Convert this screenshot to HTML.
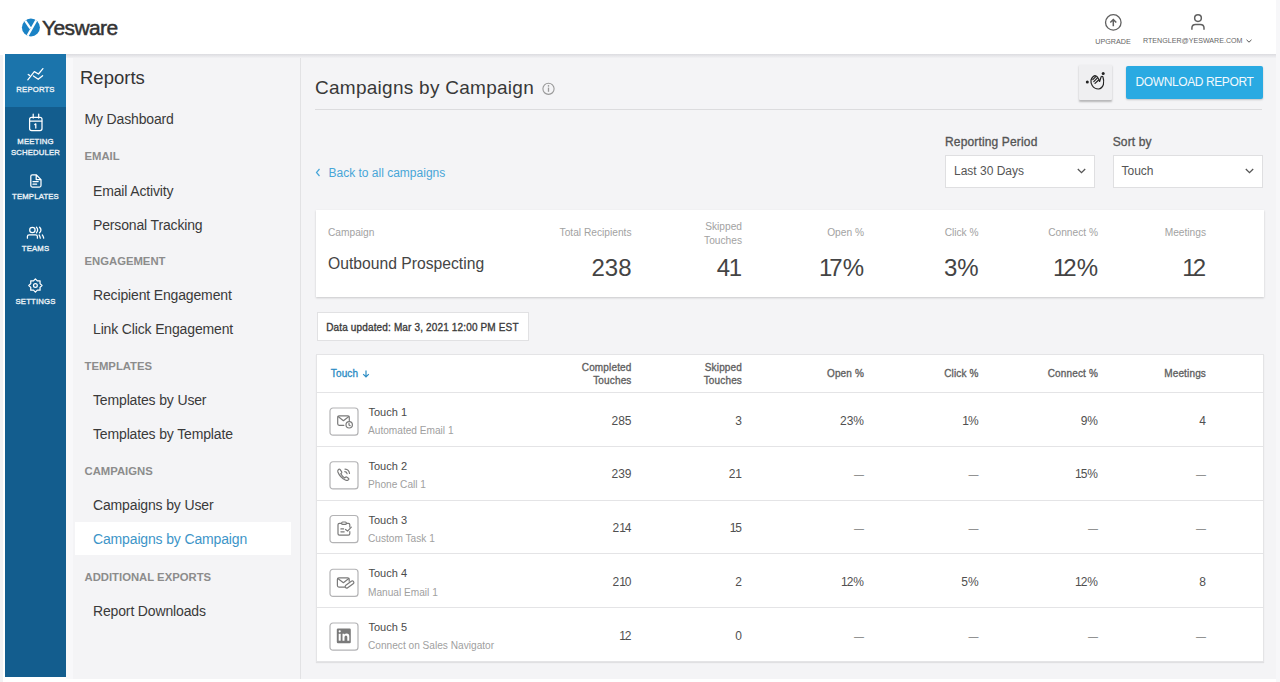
<!DOCTYPE html>
<html><head><meta charset="utf-8">
<style>
*{margin:0;padding:0;box-sizing:border-box}
html,body{width:1280px;height:682px;overflow:hidden;background:#fff;font-family:"Liberation Sans",sans-serif;color:#333}
.abs{position:absolute}
.t{position:absolute;white-space:nowrap;line-height:1}
svg{position:absolute;overflow:visible}
</style></head><body>
<div class="abs" style="left:0px;top:0px;width:3px;height:682px;background:#f1f1f3"></div>
<div class="abs" style="left:1276px;top:0px;width:4px;height:682px;background:#f7f7f9"></div>
<div class="abs" style="left:0px;top:0px;width:1276px;height:55px;background:#fff"></div>
<div class="abs" style="left:5px;top:54px;width:61px;height:623px;background:#135d8e"></div>
<div class="abs" style="left:5px;top:54px;width:61px;height:53px;background:#1b74ab"></div>
<div class="abs" style="left:66px;top:54px;width:234px;height:625px;background:#f4f4f6"></div>
<div class="abs" style="left:66px;top:54px;width:7px;height:625px;background:#f8f8fa"></div>
<div class="abs" style="left:300px;top:54px;width:1px;height:625px;background:#e2e2e4"></div>
<div class="abs" style="left:301px;top:54px;width:975px;height:625px;background:#f4f4f6"></div>
<div class="abs" style="left:66px;top:54px;width:1210px;height:3.5px;background:linear-gradient(#dcdce0,#f2f2f4)"></div>
<div class="t" style="left:42px;top:17.0px;font-size:21px;color:#333;font-weight:normal;letter-spacing:-0.6px;-webkit-text-stroke:0.5px #333">Yesware</div>
<div class="t" style="left:913px;width:400px;text-align:center;top:37.9px;font-size:7.2px;color:#666;font-weight:normal;">UPGRADE</div>
<div class="t" style="left:1143px;top:38.0px;font-size:7.1px;color:#666;font-weight:normal;">RTENGLER@YESWARE.COM</div>
<svg style="left:1246px;top:39px" width="6" height="4" viewBox="0 0 6 4"><path d="M0.5 0.8 L3 3.2 L5.5 0.8" stroke="#555" stroke-width="1" fill="none"/></svg>
<div class="t" style="left:-164.5px;width:400px;text-align:center;top:85.6px;font-size:7.75px;color:#edf3f8;font-weight:normal;-webkit-text-stroke:0.32px #edf3f8;letter-spacing:0.15px;">REPORTS</div>
<div class="t" style="left:-164.5px;width:400px;text-align:center;top:137.7px;font-size:7.75px;color:#edf3f8;font-weight:normal;-webkit-text-stroke:0.32px #edf3f8;letter-spacing:0.15px;">MEETING</div>
<div class="t" style="left:-164.5px;width:400px;text-align:center;top:148.5px;font-size:7.75px;color:#edf3f8;font-weight:normal;-webkit-text-stroke:0.32px #edf3f8;letter-spacing:0.15px;">SCHEDULER</div>
<div class="t" style="left:-164.5px;width:400px;text-align:center;top:192.5px;font-size:7.75px;color:#edf3f8;font-weight:normal;-webkit-text-stroke:0.32px #edf3f8;letter-spacing:0.15px;">TEMPLATES</div>
<div class="t" style="left:-164.5px;width:400px;text-align:center;top:244.9px;font-size:7.75px;color:#edf3f8;font-weight:normal;-webkit-text-stroke:0.32px #edf3f8;letter-spacing:0.15px;">TEAMS</div>
<div class="t" style="left:-164.5px;width:400px;text-align:center;top:297.5px;font-size:7.75px;color:#edf3f8;font-weight:normal;-webkit-text-stroke:0.32px #edf3f8;letter-spacing:0.15px;">SETTINGS</div>
<div class="t" style="left:80px;top:68.8px;font-size:18.5px;color:#333;font-weight:normal;">Reports</div>
<div class="t" style="left:84.5px;top:111.8px;font-size:14px;color:#3a3a3a;font-weight:normal;letter-spacing:-0.15px">My Dashboard</div>
<div class="t" style="left:84.5px;top:151.3px;font-size:11.3px;color:#8c8c8c;font-weight:bold;">EMAIL</div>
<div class="t" style="left:93px;top:183.5px;font-size:14px;color:#3a3a3a;font-weight:normal;letter-spacing:-0.15px">Email Activity</div>
<div class="t" style="left:93px;top:217.5px;font-size:14px;color:#3a3a3a;font-weight:normal;letter-spacing:-0.15px">Personal Tracking</div>
<div class="t" style="left:84.5px;top:256.2px;font-size:11.3px;color:#8c8c8c;font-weight:bold;">ENGAGEMENT</div>
<div class="t" style="left:93px;top:288.3px;font-size:14px;color:#3a3a3a;font-weight:normal;letter-spacing:-0.15px">Recipient Engagement</div>
<div class="t" style="left:93px;top:322.2px;font-size:14px;color:#3a3a3a;font-weight:normal;letter-spacing:-0.15px">Link Click Engagement</div>
<div class="t" style="left:84.5px;top:361.0px;font-size:11.3px;color:#8c8c8c;font-weight:bold;">TEMPLATES</div>
<div class="t" style="left:93px;top:393.2px;font-size:14px;color:#3a3a3a;font-weight:normal;letter-spacing:-0.15px">Templates by User</div>
<div class="t" style="left:93px;top:427.0px;font-size:14px;color:#3a3a3a;font-weight:normal;letter-spacing:-0.15px">Templates by Template</div>
<div class="t" style="left:84.5px;top:466.4px;font-size:11.3px;color:#8c8c8c;font-weight:bold;">CAMPAIGNS</div>
<div class="t" style="left:93px;top:498.0px;font-size:14px;color:#3a3a3a;font-weight:normal;letter-spacing:-0.15px">Campaigns by User</div>
<div class="abs" style="left:75px;top:522px;width:216px;height:33px;background:#fff"></div>
<div class="t" style="left:93px;top:532.0px;font-size:14px;color:#3d95c8;font-weight:normal;letter-spacing:-0.15px">Campaigns by Campaign</div>
<div class="t" style="left:84.5px;top:572.0px;font-size:11.3px;color:#8c8c8c;font-weight:bold;">ADDITIONAL EXPORTS</div>
<div class="t" style="left:93px;top:603.5px;font-size:14px;color:#3a3a3a;font-weight:normal;letter-spacing:-0.15px">Report Downloads</div>
<div class="t" style="left:315px;top:77.9px;font-size:19px;color:#383838;font-weight:normal;letter-spacing:0.27px">Campaigns by Campaign</div>
<div class="abs" style="left:315px;top:109px;width:947px;height:1px;background:#dcdcde"></div>
<div class="abs" style="left:1079px;top:65px;width:33px;height:35px;background:#efeff1;box-shadow:0 1.5px 2px rgba(0,0,0,0.25);border-radius:1px"></div>
<div class="abs" style="left:1126px;top:66px;width:137px;height:33px;background:#2aaae2;border-radius:2px;box-shadow:0 1px 2px rgba(0,0,0,0.2)"></div>
<div class="t" style="left:994.5px;width:400px;text-align:center;top:76.0px;font-size:12px;color:#f2f9fd;font-weight:normal;letter-spacing:-0.4px">DOWNLOAD REPORT</div>
<div class="t" style="left:328.5px;top:166.5px;font-size:12px;color:#48a6d8;font-weight:normal;">Back to all campaigns</div>
<svg style="left:315px;top:168px" width="6" height="9" viewBox="0 0 6 9"><path d="M4.5 1 L1.5 4.5 L4.5 8" stroke="#48a6d8" stroke-width="1.2" fill="none"/></svg>
<div class="t" style="left:945px;top:136.0px;font-size:12px;color:#555;font-weight:normal;-webkit-text-stroke:0.32px #555;letter-spacing:0.15px;">Reporting Period</div>
<div class="t" style="left:1112.7px;top:136.0px;font-size:12px;color:#555;font-weight:normal;-webkit-text-stroke:0.32px #555;letter-spacing:0.15px;">Sort by</div>
<div class="abs" style="left:945px;top:155px;width:150px;height:33px;background:#fff;border:1px solid #dfdfe1"></div>
<div class="abs" style="left:1112.5px;top:155px;width:150px;height:33px;background:#fff;border:1px solid #dfdfe1"></div>
<div class="t" style="left:954px;top:164.6px;font-size:12px;color:#555;font-weight:normal;">Last 30 Days</div>
<div class="t" style="left:1121.5px;top:164.6px;font-size:12px;color:#555;font-weight:normal;">Touch</div>
<svg style="left:1077.0px;top:168px" width="9" height="6" viewBox="0 0 9 6"><path d="M0.8 1 L4.5 4.6 L8.2 1" stroke="#555" stroke-width="1.3" fill="none"/></svg>
<svg style="left:1244.5px;top:168px" width="9" height="6" viewBox="0 0 9 6"><path d="M0.8 1 L4.5 4.6 L8.2 1" stroke="#555" stroke-width="1.3" fill="none"/></svg>
<div class="abs" style="left:316px;top:210px;width:948px;height:87px;background:#fff;box-shadow:0 1px 2px rgba(0,0,0,0.18)"></div>
<div class="t" style="left:328px;top:228.1px;font-size:10.2px;color:#a2a2a2;font-weight:normal;">Campaign</div>
<div class="t" style="left:231.5px;width:400px;text-align:right;top:228.1px;font-size:10.2px;color:#a2a2a2;font-weight:normal;">Total Recipients</div>
<div class="t" style="left:342px;width:400px;text-align:right;top:222.2px;font-size:10.2px;color:#a2a2a2;font-weight:normal;">Skipped</div>
<div class="t" style="left:342px;width:400px;text-align:right;top:235.6px;font-size:10.2px;color:#a2a2a2;font-weight:normal;">Touches</div>
<div class="t" style="left:464px;width:400px;text-align:right;top:228.1px;font-size:10.2px;color:#a2a2a2;font-weight:normal;">Open %</div>
<div class="t" style="left:578.6px;width:400px;text-align:right;top:228.1px;font-size:10.2px;color:#a2a2a2;font-weight:normal;">Click %</div>
<div class="t" style="left:698px;width:400px;text-align:right;top:228.1px;font-size:10.2px;color:#a2a2a2;font-weight:normal;">Connect %</div>
<div class="t" style="left:806px;width:400px;text-align:right;top:228.1px;font-size:10.2px;color:#a2a2a2;font-weight:normal;">Meetings</div>
<div class="t" style="left:328px;top:256.1px;font-size:15.7px;color:#454545;font-weight:normal;">Outbound Prospecting</div>
<div class="t" style="left:231.5px;width:400px;text-align:right;top:255.5px;font-size:24px;color:#444;font-weight:normal;">238</div>
<div class="t" style="left:339px;width:400px;text-align:right;top:255.5px;font-size:24px;color:#444;font-weight:normal;"><span style="letter-spacing:-1.5px">4</span><span style="letter-spacing:-3px">1</span></div>
<div class="t" style="left:461.5px;width:400px;text-align:right;top:255.5px;font-size:24px;color:#444;font-weight:normal;"><span style="letter-spacing:-3px">1</span>7<span style="letter-spacing:-2.5px">%</span></div>
<div class="t" style="left:576.1px;width:400px;text-align:right;top:255.5px;font-size:24px;color:#444;font-weight:normal;">3<span style="letter-spacing:-2.5px">%</span></div>
<div class="t" style="left:695.5px;width:400px;text-align:right;top:255.5px;font-size:24px;color:#444;font-weight:normal;"><span style="letter-spacing:-3px">1</span>2<span style="letter-spacing:-2.5px">%</span></div>
<div class="t" style="left:806px;width:400px;text-align:right;top:255.5px;font-size:24px;color:#444;font-weight:normal;"><span style="letter-spacing:-3px">1</span>2</div>
<div class="abs" style="left:317px;top:311.5px;width:212px;height:29px;background:#fff;border:1px solid #e1e1e3"></div>
<div class="t" style="left:326.2px;top:323.0px;font-size:10px;color:#3a3a3a;font-weight:normal;-webkit-text-stroke:0.32px #3a3a3a;letter-spacing:0.15px;">Data updated: Mar 3, 2021 12:00 PM EST</div>
<div class="abs" style="left:316px;top:354px;width:948px;height:307.5px;background:#fff;border:1px solid #e4e4e6;box-shadow:0 1px 1px rgba(0,0,0,0.08)"></div>
<div class="t" style="left:330.8px;top:369.0px;font-size:10px;color:#2b8cc4;font-weight:normal;-webkit-text-stroke:0.32px #2b8cc4;letter-spacing:0.15px;">Touch</div>
<svg style="left:362px;top:370px" width="8" height="8" viewBox="0 0 8 8"><path d="M4 0.5 V7 M1.2 4.2 L4 7 L6.8 4.2" stroke="#2b8cc4" stroke-width="1.2" fill="none"/></svg>
<div class="t" style="left:231.5px;width:400px;text-align:right;top:362.5px;font-size:10px;color:#606060;font-weight:normal;-webkit-text-stroke:0.32px #606060;letter-spacing:0.15px;">Completed</div>
<div class="t" style="left:231.5px;width:400px;text-align:right;top:375.5px;font-size:10px;color:#606060;font-weight:normal;-webkit-text-stroke:0.32px #606060;letter-spacing:0.15px;">Touches</div>
<div class="t" style="left:342px;width:400px;text-align:right;top:362.5px;font-size:10px;color:#606060;font-weight:normal;-webkit-text-stroke:0.32px #606060;letter-spacing:0.15px;">Skipped</div>
<div class="t" style="left:342px;width:400px;text-align:right;top:375.5px;font-size:10px;color:#606060;font-weight:normal;-webkit-text-stroke:0.32px #606060;letter-spacing:0.15px;">Touches</div>
<div class="t" style="left:464px;width:400px;text-align:right;top:369.0px;font-size:10px;color:#606060;font-weight:normal;-webkit-text-stroke:0.32px #606060;letter-spacing:0.15px;">Open %</div>
<div class="t" style="left:578.6px;width:400px;text-align:right;top:369.0px;font-size:10px;color:#606060;font-weight:normal;-webkit-text-stroke:0.32px #606060;letter-spacing:0.15px;">Click %</div>
<div class="t" style="left:698px;width:400px;text-align:right;top:369.0px;font-size:10px;color:#606060;font-weight:normal;-webkit-text-stroke:0.32px #606060;letter-spacing:0.15px;">Connect %</div>
<div class="t" style="left:806px;width:400px;text-align:right;top:369.0px;font-size:10px;color:#606060;font-weight:normal;-webkit-text-stroke:0.32px #606060;letter-spacing:0.15px;">Meetings</div>
<div class="abs" style="left:316px;top:392.1px;width:948px;height:1px;background:#e4e4e6"></div>
<div class="t" style="left:368.5px;top:407.2px;font-size:11px;color:#4a4a4a;font-weight:normal;">Touch 1</div>
<div class="t" style="left:368px;top:426.3px;font-size:10.15px;color:#a0a0a0;font-weight:normal;">Automated Email 1</div>
<div class="t" style="left:231.5px;width:400px;text-align:right;top:414.6px;font-size:12px;color:#505050;font-weight:normal;">285</div>
<div class="t" style="left:342px;width:400px;text-align:right;top:414.6px;font-size:12px;color:#505050;font-weight:normal;">3</div>
<div class="t" style="left:463px;width:400px;text-align:right;top:414.6px;font-size:12px;color:#505050;font-weight:normal;">23<span style="letter-spacing:-1px">%</span></div>
<div class="t" style="left:577.6px;width:400px;text-align:right;top:414.6px;font-size:12px;color:#505050;font-weight:normal;"><span style="letter-spacing:-1px">1</span><span style="letter-spacing:-1px">%</span></div>
<div class="t" style="left:697px;width:400px;text-align:right;top:414.6px;font-size:12px;color:#505050;font-weight:normal;">9<span style="letter-spacing:-1px">%</span></div>
<div class="t" style="left:806px;width:400px;text-align:right;top:414.6px;font-size:12px;color:#505050;font-weight:normal;">4</div>
<div class="abs" style="left:316px;top:445.83000000000004px;width:948px;height:1px;background:#e4e4e6"></div>
<div class="t" style="left:368.5px;top:460.9px;font-size:11px;color:#4a4a4a;font-weight:normal;">Touch 2</div>
<div class="t" style="left:368px;top:480.1px;font-size:10.15px;color:#a0a0a0;font-weight:normal;">Phone Call 1</div>
<div class="t" style="left:231.5px;width:400px;text-align:right;top:468.3px;font-size:12px;color:#505050;font-weight:normal;">239</div>
<div class="t" style="left:341px;width:400px;text-align:right;top:468.3px;font-size:12px;color:#505050;font-weight:normal;">2<span style="letter-spacing:-1px">1</span></div>
<div class="t" style="left:464px;width:400px;text-align:right;top:470.3px;font-size:10px;color:#7a7a7a;font-weight:normal;">—</div>
<div class="t" style="left:578.6px;width:400px;text-align:right;top:470.3px;font-size:10px;color:#7a7a7a;font-weight:normal;">—</div>
<div class="t" style="left:697px;width:400px;text-align:right;top:468.3px;font-size:12px;color:#505050;font-weight:normal;"><span style="letter-spacing:-1px">1</span>5<span style="letter-spacing:-1px">%</span></div>
<div class="t" style="left:806px;width:400px;text-align:right;top:470.3px;font-size:10px;color:#7a7a7a;font-weight:normal;">—</div>
<div class="abs" style="left:316px;top:499.56px;width:948px;height:1px;background:#e4e4e6"></div>
<div class="t" style="left:368.5px;top:514.7px;font-size:11px;color:#4a4a4a;font-weight:normal;">Touch 3</div>
<div class="t" style="left:368px;top:533.8px;font-size:10.15px;color:#a0a0a0;font-weight:normal;">Custom Task 1</div>
<div class="t" style="left:231.5px;width:400px;text-align:right;top:522.1px;font-size:12px;color:#505050;font-weight:normal;">2<span style="letter-spacing:-1px">1</span>4</div>
<div class="t" style="left:342px;width:400px;text-align:right;top:522.1px;font-size:12px;color:#505050;font-weight:normal;"><span style="letter-spacing:-1px">1</span>5</div>
<div class="t" style="left:464px;width:400px;text-align:right;top:524.1px;font-size:10px;color:#7a7a7a;font-weight:normal;">—</div>
<div class="t" style="left:578.6px;width:400px;text-align:right;top:524.1px;font-size:10px;color:#7a7a7a;font-weight:normal;">—</div>
<div class="t" style="left:698px;width:400px;text-align:right;top:524.1px;font-size:10px;color:#7a7a7a;font-weight:normal;">—</div>
<div class="t" style="left:806px;width:400px;text-align:right;top:524.1px;font-size:10px;color:#7a7a7a;font-weight:normal;">—</div>
<div class="abs" style="left:316px;top:553.29px;width:948px;height:1px;background:#e4e4e6"></div>
<div class="t" style="left:368.5px;top:568.4px;font-size:11px;color:#4a4a4a;font-weight:normal;">Touch 4</div>
<div class="t" style="left:368px;top:587.5px;font-size:10.15px;color:#a0a0a0;font-weight:normal;">Manual Email 1</div>
<div class="t" style="left:231.5px;width:400px;text-align:right;top:575.8px;font-size:12px;color:#505050;font-weight:normal;">2<span style="letter-spacing:-1px">1</span>0</div>
<div class="t" style="left:342px;width:400px;text-align:right;top:575.8px;font-size:12px;color:#505050;font-weight:normal;">2</div>
<div class="t" style="left:463px;width:400px;text-align:right;top:575.8px;font-size:12px;color:#505050;font-weight:normal;"><span style="letter-spacing:-1px">1</span>2<span style="letter-spacing:-1px">%</span></div>
<div class="t" style="left:577.6px;width:400px;text-align:right;top:575.8px;font-size:12px;color:#505050;font-weight:normal;">5<span style="letter-spacing:-1px">%</span></div>
<div class="t" style="left:697px;width:400px;text-align:right;top:575.8px;font-size:12px;color:#505050;font-weight:normal;"><span style="letter-spacing:-1px">1</span>2<span style="letter-spacing:-1px">%</span></div>
<div class="t" style="left:806px;width:400px;text-align:right;top:575.8px;font-size:12px;color:#505050;font-weight:normal;">8</div>
<div class="abs" style="left:316px;top:607.02px;width:948px;height:1px;background:#e4e4e6"></div>
<div class="t" style="left:368.5px;top:622.1px;font-size:11px;color:#4a4a4a;font-weight:normal;">Touch 5</div>
<div class="t" style="left:368px;top:641.2px;font-size:10.15px;color:#a0a0a0;font-weight:normal;">Connect on Sales Navigator</div>
<div class="t" style="left:231.5px;width:400px;text-align:right;top:629.5px;font-size:12px;color:#505050;font-weight:normal;"><span style="letter-spacing:-1px">1</span>2</div>
<div class="t" style="left:342px;width:400px;text-align:right;top:629.5px;font-size:12px;color:#505050;font-weight:normal;">0</div>
<div class="t" style="left:464px;width:400px;text-align:right;top:631.5px;font-size:10px;color:#7a7a7a;font-weight:normal;">—</div>
<div class="t" style="left:578.6px;width:400px;text-align:right;top:631.5px;font-size:10px;color:#7a7a7a;font-weight:normal;">—</div>
<div class="t" style="left:698px;width:400px;text-align:right;top:631.5px;font-size:10px;color:#7a7a7a;font-weight:normal;">—</div>
<div class="t" style="left:806px;width:400px;text-align:right;top:631.5px;font-size:10px;color:#7a7a7a;font-weight:normal;">—</div>
<svg style="left:0;top:0;pointer-events:none" width="1280" height="682" viewBox="0 0 1280 682">
<defs><clipPath id="lc"><circle cx="30.9" cy="27.5" r="9"/></clipPath></defs>
<circle cx="30.9" cy="27.5" r="9" fill="#1a82c5"/>
<g clip-path="url(#lc)" stroke="#fff" stroke-width="2.3" fill="none" stroke-linecap="butt"><path d="M23.6 18.4 L30.4 28.3"/><path d="M37 19 L26.6 37.5"/></g>
<g stroke="#606060" fill="none"><circle cx="1113.3" cy="22.4" r="7.75" stroke-width="1.3"/><path d="M1113.3 26.3 V19.6 M1110.3 22.6 L1113.3 19.5 L1116.3 22.6" stroke-width="1.5"/></g>
<g stroke="#606060" fill="none" stroke-width="1.5"><circle cx="1198" cy="18.1" r="3.35"/><path d="M1191.9 29.8 V28 Q1191.9 24.4 1195.6 24.4 H1200.3 Q1204 24.4 1204 28 V29.8"/></g>
<g fill="none" stroke="#999" stroke-width="1.1"><circle cx="548.5" cy="88.8" r="5.6"/><path d="M548.5 87.6 V91.8" stroke-width="1.3"/></g><circle cx="548.5" cy="85.9" r="0.8" fill="#999"/>
<g stroke="#222" fill="none" stroke-width="1.2" stroke-linecap="round" stroke-linejoin="round"><path d="M1091 80 Q1092.5 76 1095 75.6 Q1097.5 75.6 1099.6 81.5 L1101.2 76.6 Q1102 75.8 1102.9 76.8 Q1104.2 80.5 1103.4 84.5 Q1102 88.5 1098.4 89 Q1094.5 89 1092.2 85.5 Q1090.6 83 1091 80 Z"/><path d="M1092.8 79.6 L1095.8 76.6 M1093.8 81.6 L1097.2 78.2 M1095 83.4 L1098.4 80.2"/></g><circle cx="1087.3" cy="82.1" r="1.5" fill="#222"/><circle cx="1103.2" cy="73.4" r="1.5" fill="#222"/>
<g stroke="#fff" fill="none" stroke-width="1.25" stroke-linecap="round" stroke-linejoin="round">
<path d="M27.8 79.8 L34.3 71.6 L38.5 74 L42.9 68.6"/>
<path d="M28.2 74.5 L29.6 75.4 M33.4 75.9 L38.2 79.3 L42.6 75.7"/>
<rect x="29.6" y="117.3" width="12.4" height="13.2" rx="2"/><path d="M29.8 121 H41.8 M33.2 114 V118 M38.7 114 V118"/>
<path d="M34.8 124.6 L35.8 123.8 V128"/>
<path d="M36.2 174.8 H32.3 Q30.8 174.8 30.8 176.3 V185.6 Q30.8 187.1 32.3 187.1 H39.5 Q41 187.1 41 185.6 V179.6 Z M36.2 174.8 V179.6 H41"/>
<path d="M33 181.5 H38.2 M33 184.2 H36.6"/>
<circle cx="32.4" cy="230" r="2.7"/><path d="M27.4 238.2 V236.6 Q27.4 234.8 29.2 234.8 H35.6 Q37.4 234.8 37.4 236.6 V238.2"/>
<path d="M36.4 227.2 Q38.9 230 36.4 232.8 M39.6 227.2 Q42.3 230 39.6 232.8 M39.1 234.9 Q40.1 236.4 40.3 238.2 M42.3 234.9 Q43.4 236.4 43.7 238.2"/>
<path d="M35.40 278.90 L37.31 280.88 L40.07 280.83 L40.02 283.59 L42.00 285.50 L40.02 287.41 L40.07 290.17 L37.31 290.12 L35.40 292.10 L33.49 290.12 L30.73 290.17 L30.78 287.41 L28.80 285.50 L30.78 283.59 L30.73 280.83 L33.49 280.88 Z"/>
<circle cx="35.4" cy="285.5" r="1.9"/>
</g>
<g transform="translate(329.4,407.4)">
<rect x="0.6" y="0.6" width="28" height="27.2" rx="3" fill="none" stroke="#b3b3b5" stroke-width="1.2"/>
<g fill="none" stroke="#7a7a7a" stroke-width="1.2" stroke-linecap="round" stroke-linejoin="round"><path d="M14.5 17.9 H9.8 Q8.3 17.9 8.3 16.4 V10 Q8.3 8.5 9.8 8.5 H18.4 Q19.9 8.5 19.9 10 V13"/><path d="M8.7 9.1 L14 13.3 L19.5 9.1"/><circle cx="19.8" cy="17.4" r="3.2"/><path d="M19.6 15.9 V17.6 L20.8 18.3"/></g>
</g>
<g transform="translate(329.4,461.15)">
<rect x="0.6" y="0.6" width="28" height="27.2" rx="3" fill="none" stroke="#b3b3b5" stroke-width="1.2"/>
<g fill="none" stroke="#7a7a7a" stroke-width="1.2" stroke-linecap="round" stroke-linejoin="round"><path d="M10.6 8.3 L12.3 10.8 Q12.6 11.4 12.1 11.9 L11.4 12.6 Q12.8 15.3 15.4 16.8 L16.1 16.1 Q16.6 15.6 17.2 15.9 L19.3 17.4 Q19.7 17.8 19.3 18.3 L18.5 19 Q17.6 19.6 16.4 19.1 Q10.6 16.5 8.5 10.9 Q8.1 9.7 8.8 8.8 L9.5 8.1 Q10.1 7.7 10.6 8.3 Z"/><path d="M15.6 8 Q19.7 8.4 20.1 12.3 M15.4 10.4 Q17.4 10.7 17.7 12.6"/></g>
</g>
<g transform="translate(329.4,514.9)">
<rect x="0.6" y="0.6" width="28" height="27.2" rx="3" fill="none" stroke="#b3b3b5" stroke-width="1.2"/>
<g fill="none" stroke="#7a7a7a" stroke-width="1.2" stroke-linecap="round" stroke-linejoin="round"><path d="M12.1 8.4 H10 Q8.6 8.4 8.6 9.8 V18.8 Q8.6 20.2 10 20.2 H19 Q20.4 20.2 20.4 18.8 V16.6 M20.4 12.2 V9.8 Q20.4 8.4 19 8.4 H17"/><rect x="12.3" y="7.1" width="4.6" height="2.4" rx="0.9"/><path d="M16.1 14.6 L18.2 16.2 L21.9 12.2 M11.5 14 H14.2 M11.5 16.9 H14.8"/></g>
</g>
<g transform="translate(329.4,568.65)">
<rect x="0.6" y="0.6" width="28" height="27.2" rx="3" fill="none" stroke="#b3b3b5" stroke-width="1.2"/>
<g fill="none" stroke="#7a7a7a" stroke-width="1.2" stroke-linecap="round" stroke-linejoin="round"><path d="M15.2 18.4 H9.5 Q8 18.4 8 16.9 V10.8 Q8 9.3 9.5 9.3 H18.3 Q19.8 9.3 19.8 10.8 V12.6"/><path d="M8.4 9.9 L14 14 L19.4 9.9"/><g transform="translate(20.1 15.8) rotate(-36)"><rect x="-5" y="-1.6" width="10" height="3.2" rx="1.6"/></g></g>
</g>
<g transform="translate(329.4,622.4)">
<rect x="0.6" y="0.6" width="28" height="27.2" rx="3" fill="none" stroke="#b3b3b5" stroke-width="1.2"/>
<rect x="7.4" y="6.1" width="14" height="14.7" rx="1.2" fill="#7a7a7a"/><rect x="9.3" y="11.4" width="2" height="6.9" fill="#fff"/><circle cx="10.3" cy="8.9" r="1.1" fill="#fff"/><path d="M13.1 18.3 V11.4 H14.9 V12.2 Q15.8 11.2 17.3 11.2 Q19.9 11.2 19.9 14 V18.3 H17.9 V14.6 Q17.9 13 16.6 13 Q15.1 13 15.1 14.8 V18.3 Z" fill="#fff"/>
</g>
</svg>
</body></html>
